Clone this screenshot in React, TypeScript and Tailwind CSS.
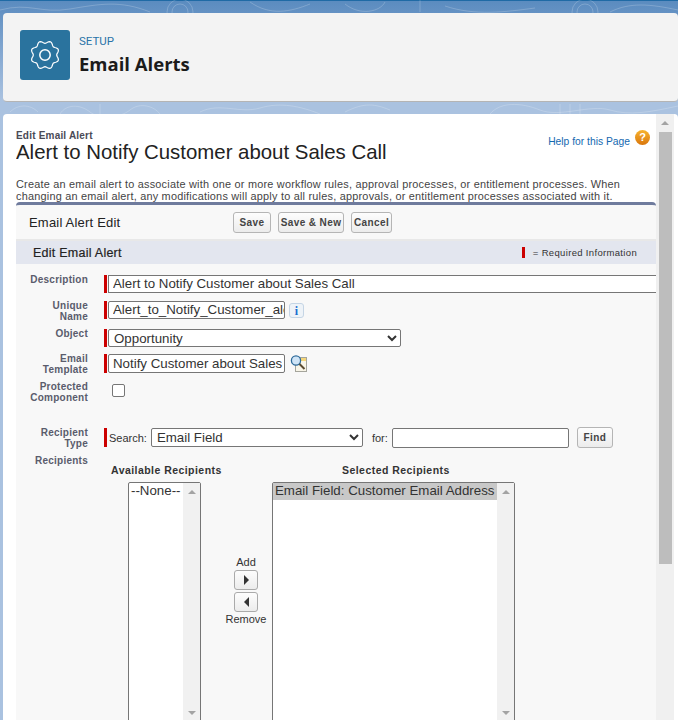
const font = "font-['Liberation_Sans',Arial,sans-serif]";

function gearPath() {
  // scalloped outline, 8 lobes
  const pts: string[] = [];
  const n = 96;
  for (let i = 0; i <= n; i++) {
    const a = (i / n) * Math.PI * 2 + Math.PI / 8;
    const r = 13 + 1.3 * Math.cos(a * 8 - Math.PI);
    pts.push(`${(25 + r * Math.cos(a)).toFixed(2)} ${(25 + r * Math.sin(a)).toFixed(2)}`);
  }
  return 'M' + pts.join('L') + 'Z';
}

function Label({ children }: { children: React.ReactNode }) {
  return (
    <div className="-mt-[1px] w-[72px] shrink-0 text-right text-[10px] leading-[11px] font-bold tracking-[0.25px] text-[#5a5c6c]">
      {children}
    </div>
  );
}

function Req({ h = 'h-[18px]' }: { h?: string }) {
  return <div className={`mr-[1px] ml-[16px] w-[3px] bg-[#c00] ${h} shrink-0`} />;
}

function Btn({ children, className = '' }: { children: React.ReactNode; className?: string }) {
  return (
    <button className={`h-[21px] rounded-[3px] border border-[#b5b5b5] bg-gradient-to-b from-[#fdfdfd] to-[#ececec] text-[10px] font-bold tracking-[0.4px] text-[#444] ${className}`}>
      {children}
    </button>
  );
}

function ListBox({ width, children }: { width: string; children: React.ReactNode }) {
  return (
    <div className={`flex h-[260px] ${width} shrink-0 rounded-t-[2px] border border-[#767676] bg-white`}>
      <div className="flex-1 overflow-hidden text-[13.3px] leading-[16px] whitespace-nowrap text-[#333]">{children}</div>
      <div className="flex w-[17px] flex-col items-center justify-between bg-[#f1f1f1] pt-[7px] pb-[26px]">
        <div className="h-0 w-0 border-x-[4px] border-b-[4px] border-x-transparent border-b-[#a3a3a3]" />
        <div className="h-0 w-0 border-x-[4px] border-t-[4px] border-x-transparent border-t-[#a3a3a3]" />
      </div>
    </div>
  );
}

export default function App() {
  return (
    <div className={`relative h-[720px] w-[678px] overflow-hidden bg-gradient-to-b from-[#5a8bbf] to-[#aac2e0] to-[14%] ${font}`}>
      <div className="h-[1px] bg-[#1f6aa5]" />

      {/* faint contour lines behind the cards */}
      <svg className="absolute top-0 left-0" width="678" height="114" fill="none" stroke="#ffffff" strokeOpacity="0.2">
        <path d="M0 10C30 2 40 14 70 9S120 0 150 12M250 2c20 14 40 10 60 2M345 4c15 12 35 8 40 -2M420 0v12M445 6c30 10 60 6 90 2M610 12c20-10 40-8 68-2" />
        <circle cx="180" cy="12" r="13" />
        <circle cx="180" cy="12" r="8" />
        <circle cx="585" cy="12" r="13" />
        <circle cx="585" cy="12" r="8" />
        <path d="M10 112c8-8 20-8 28 0M60 114c6-10 20-10 30-2s30 6 40-2 24-4 30 4M200 112c20-10 40 2 60-4s40-2 60 6M345 112c20-10 30-8 45-2M490 114c10-12 30-12 50-4s50-6 70 0 40 2 68-4M100 104v10M560 104v10M570 104v10M580 104v10" />
      </svg>

      <div className="relative mt-[12px] ml-[3px] flex h-[89px] items-start rounded-[4px] border-b border-[#b4b4b4] bg-[#f3f3f3] pt-[17px] pl-[17px]">
        <div className="flex h-[50px] w-[50px] items-center justify-center rounded-[3px] bg-[#2a739e]">
          <svg width="50" height="50" fill="none" stroke="#fff" strokeWidth="1.2">
            <path d={gearPath()} />
            <circle cx="25" cy="25" r="5.2" strokeWidth="1.5" />
          </svg>
        </div>
        <div className="ml-[9px] flex flex-col">
          <div className="mt-[3px] font-['Roboto',sans-serif] text-[11.5px] leading-[16px] text-[#2a73a8]">SETUP</div>
          <div className="mt-[2px] font-['Open_Sans',sans-serif] text-[18.5px] leading-[26px] font-bold text-[#1b1b1b]">Email Alerts</div>
        </div>
      </div>

      <div className="relative mt-[12px] ml-[3px] flex h-[606px] rounded-t-[4px] bg-white pl-[13px]">
        <div className="flex w-[640px] flex-col">
          <div className="relative h-[88px] shrink-0 overflow-hidden pt-[16px]">
            <div className="text-[10px] leading-[11px] font-bold tracking-[0.2px] text-[#4a4a56]">Edit Email Alert</div>
            <div className="text-[20.4px] leading-[22px] text-[#222]">Alert to Notify Customer about Sales Call</div>
            <p className="mt-[15px] w-[641px] text-[10.9px] leading-[12px] tracking-[0.22px] text-[#444]">
              Create an email alert to associate with one or more workflow rules, approval processes, or entitlement processes. When changing an email alert, any modifications will apply to all rules, approvals, or entitlement processes associated with it.
            </p>
            <div className="absolute top-[16px] right-[6px] flex items-start gap-[5px]">
              <span className="pt-[5px] text-[10.3px] leading-[13px] text-[#1468b0]">Help for this Page</span>
              <span className="flex h-[15px] w-[15px] items-center justify-center rounded-full bg-gradient-to-b from-[#f7b32d] to-[#d9760a] text-[11px] font-bold text-white">?</span>
            </div>
          </div>

          <div className="flex-1 overflow-hidden rounded-t-[4px] border-t-[3px] border-[#6f7b9d] bg-[#f8f8f8]">
            <div className="flex h-[36px] items-center border-b-2 border-[#e8e8e8]">
              <div className="w-[217px] pt-[2px] pl-[13px] text-[13px] tracking-[0.2px] text-[#222]">Email Alert Edit</div>
              <div className="flex gap-[7px]">
                <Btn className="w-[38px]">Save</Btn>
                <Btn className="w-[66px]">Save &amp; New</Btn>
                <Btn className="w-[41px]">Cancel</Btn>
              </div>
            </div>
            <div className="flex h-[23px] items-center justify-between bg-[#e3e6ef] pt-[2px] pr-[19px] pl-[17px]">
              <span className="text-[12.5px] font-medium tracking-[0.25px] text-[#222] [-webkit-text-stroke:0.2px_#222]">Edit Email Alert</span>
              <span className="flex items-center text-[9.5px] tracking-[0.33px] text-[#333]">
                <span className="mr-[8px] -mt-[2px] h-[11px] w-[3px] bg-[#c00]" />= Required Information
              </span>
            </div>

            <div className="flex flex-col pt-[11px]">
              <div className="flex h-[18px] items-start">
                <Label>Description</Label>
                <Req />
                <input readOnly value="Alert to Notify Customer about Sales Call" className="h-[18px] w-[600px] shrink-0 border border-[#767676] bg-white pl-[4px] text-[13.3px] text-[#333]" />
              </div>
              <div className="mt-[8px] flex h-[18px] items-start">
                <Label>Unique<br />Name</Label>
                <Req />
                <input readOnly value="Alert_to_Notify_Customer_alert" className="h-[18px] w-[177px] rounded-[2px] border border-[#767676] bg-white pl-[4px] text-[13.3px] text-[#333]" />
                <span className="mt-[2px] ml-[4px] flex h-[15px] w-[15px] items-center justify-center rounded-[3px] border border-[#c5d5e5] bg-[#eef3f8] font-['Liberation_Serif',serif] text-[12px] font-bold text-[#1a6fd0]">i</span>
              </div>
              <div className="mt-[10px] flex h-[18px] items-start">
                <Label>Object</Label>
                <Req />
                <select defaultValue="Opportunity" className="h-[18px] w-[293px] rounded-[2px] border border-[#767676] bg-white pl-[1px] text-[13.3px] text-[#333]"><option>Opportunity</option></select>
              </div>
              <div className="mt-[7px] flex h-[19px] items-start">
                <Label>Email<br />Template</Label>
                <Req h="h-[19px]" />
                <input readOnly value="Notify Customer about Sales Call" className="h-[19px] w-[177px] rounded-[2px] border border-[#767676] bg-white pl-[4px] text-[13.3px] text-[#333]" />
                <svg className="mt-[1px] ml-[5px]" width="17" height="17" viewBox="0 0 17 17">
                  <rect x="5.5" y="2.5" width="11" height="14" fill="#f8f5e8" stroke="#a5a59c" />
                  <rect x="9" y="3" width="7" height="3" fill="#f5d67a" />
                  <circle cx="6" cy="5.5" r="4.6" fill="#cfe4f6" stroke="#2d6a9a" strokeWidth="1.3" />
                  <path d="M9.5 9l5 5" stroke="#5a4a30" strokeWidth="2" />
                </svg>
              </div>
              <div className="mt-[8px] flex h-[22px] items-start">
                <div className="mt-[1px]"><Label>Protected<br />Component</Label></div>
                <input type="checkbox" readOnly className="mt-[3px] ml-[24px] h-[13px] w-[13px] appearance-none rounded-[2px] border border-[#767676] bg-white" />
              </div>
              <div className="mt-[25px] flex h-[21px] items-start">
                <Label>Recipient<br />Type</Label>
                <Req h="h-[19px]" />
                <span className="ml-[1px] pt-[2px] text-[11px] text-[#333]">Search:</span>
                <select defaultValue="Email Field" className="ml-[4px] h-[19px] w-[212px] rounded-[2px] border border-[#767676] bg-white pl-[1px] text-[13.3px] text-[#333]"><option>Email Field</option></select>
                <span className="ml-[9px] pt-[2px] text-[11px] text-[#333]">for:</span>
                <input readOnly className="ml-[4px] h-[20px] w-[177px] rounded-[2px] border border-[#767676] bg-white" />
                <Btn className="-mt-[1px] ml-[8px] w-[36px]">Find</Btn>
              </div>
              <div className="mt-[7px] flex items-start">
                <Label>Recipients</Label>
                <div className="ml-[23px] flex flex-col">
                  <div className="mt-[8px] mb-[6px] flex text-[10.5px] leading-[12px] font-bold tracking-[0.45px] text-[#333]">
                    <span className="w-[110px] whitespace-nowrap">Available Recipients</span>
                    <span className="ml-[121px] whitespace-nowrap">Selected Recipients</span>
                  </div>
                  <div className="ml-[17px] flex items-start">
                    <ListBox width="w-[73px]"><div className="pl-[2px]">--None--</div></ListBox>
                    <div className="mt-[74px] mr-[5px] ml-[24px] flex w-[42px] flex-col items-center text-[11px] leading-[12px] text-[#333]">
                      <span>Add</span>
                      <button className="mt-[2px] flex h-[20px] w-[24px] items-center justify-center rounded-[3px] border border-[#aaa] bg-gradient-to-b from-[#fdfdfd] to-[#ececec]">
                        <span className="h-0 w-0 border-y-[5px] border-l-[5px] border-y-transparent border-l-[#333]" />
                      </button>
                      <button className="mt-[2px] flex h-[20px] w-[24px] items-center justify-center rounded-[3px] border border-[#aaa] bg-gradient-to-b from-[#fdfdfd] to-[#ececec]">
                        <span className="h-0 w-0 border-y-[5px] border-r-[5px] border-y-transparent border-r-[#333]" />
                      </button>
                      <span className="mt-[1px]">Remove</span>
                    </div>
                    <ListBox width="w-[243px]"><div className="bg-[#c8c8c8] pb-[1px] pl-[2px]">Email Field: Customer Email Address</div></ListBox>
                  </div>
                </div>
              </div>
            </div>
          </div>
        </div>

        {/* page scrollbar */}
        <div className="flex w-[18px] flex-col items-center bg-[#f0f0f0]">
          <div className="mt-[7px] h-0 w-0 border-x-[4px] border-b-[4px] border-x-transparent border-b-[#a3a3a3]" />
          <div className="mt-[7px] h-[432px] w-[13px] bg-[#bdbdbd]" />
        </div>
      </div>
    </div>
  );
}
